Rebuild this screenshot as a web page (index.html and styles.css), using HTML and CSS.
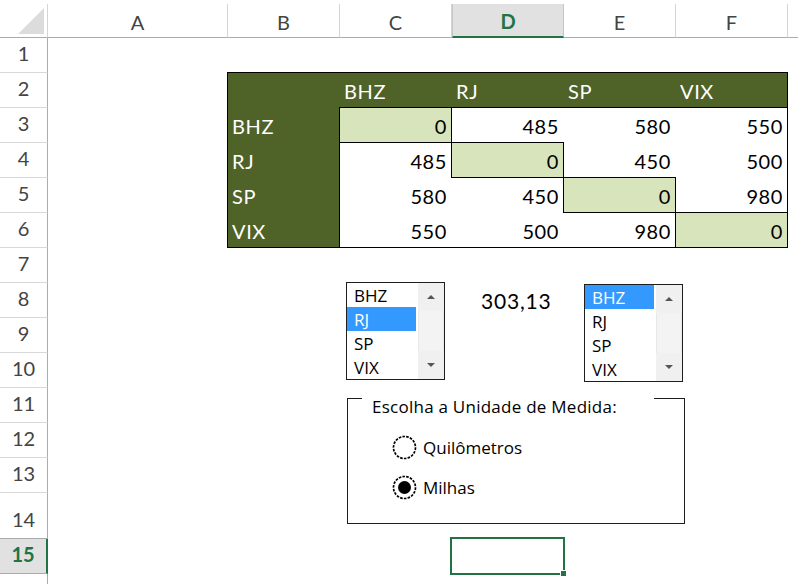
FILE: index.html
```html
<!DOCTYPE html>
<html lang="pt">
<head>
<meta charset="utf-8">
<title>Distâncias</title>
<link rel="stylesheet" href="styles.css">
</head>
<body>
<div class="app">
  <div class="sheet">
    <div class="corner"><svg class="tri" width="47" height="33" viewBox="0 0 47 33"><polygon points="18,30 44,30 44,4" fill="#dcdcdc"/></svg></div>
    <div class="ch">A</div>
    <div class="ch">B</div>
    <div class="ch">C</div>
    <div class="ch ch-active">D</div>
    <div class="ch">E</div>
    <div class="ch">F</div>
    <div class="ch ch-fill"></div>

    <div class="rh r1">1</div>
    <div class="rh r2">2</div>
    <div class="rh r3">3</div>
    <div class="rh r4">4</div>
    <div class="rh r5">5</div>
    <div class="rh r6">6</div>
    <div class="rh r7">7</div>
    <div class="rh r8">8</div>
    <div class="rh r9">9</div>
    <div class="rh r10">10</div>
    <div class="rh r11">11</div>
    <div class="rh r12">12</div>
    <div class="rh r13">13</div>
    <div class="rh r14">14</div>
    <div class="rh r15 rh-active">15</div>
    <div class="rh r16"></div>

    <div class="matrix">
      <div class="c hd"></div>
      <div class="c hd lbl-col">BHZ</div>
      <div class="c hd lbl-col">RJ</div>
      <div class="c hd lbl-col">SP</div>
      <div class="c hd lbl-col">VIX</div>

      <div class="c hd lbl-row">BHZ</div>
      <div class="c n diag bt bl">0</div>
      <div class="c n bt bl">485</div>
      <div class="c n bt">580</div>
      <div class="c n bt">550</div>

      <div class="c hd lbl-row">RJ</div>
      <div class="c n bt bl">485</div>
      <div class="c n diag bt bl">0</div>
      <div class="c n bl">450</div>
      <div class="c n">500</div>

      <div class="c hd lbl-row">SP</div>
      <div class="c n bl">580</div>
      <div class="c n bt">450</div>
      <div class="c n diag bt bl">0</div>
      <div class="c n bl">980</div>

      <div class="c hd lbl-row">VIX</div>
      <div class="c n bl">550</div>
      <div class="c n">500</div>
      <div class="c n bt">980</div>
      <div class="c n diag bt bl">0</div>
    </div>

    <div class="sel"><span class="handle"></span></div>
  </div>

  <div class="listbox lb1">
    <div class="items">
      <div class="item">BHZ</div>
      <div class="item on">RJ</div>
      <div class="item">SP</div>
      <div class="item">VIX</div>
    </div>
    <div class="sb"><div class="btn"><span class="up"></span></div><div class="track"></div><div class="btn"><span class="down"></span></div></div>
  </div>

  <div class="result">303,13</div>

  <div class="listbox lb2">
    <div class="items">
      <div class="item on">BHZ</div>
      <div class="item">RJ</div>
      <div class="item">SP</div>
      <div class="item">VIX</div>
    </div>
    <div class="sb"><div class="btn"><span class="up"></span></div><div class="track"></div><div class="btn"><span class="down"></span></div></div>
  </div>

  <div class="grp">
    <div class="grp-head"><span class="grp-title">Escolha a Unidade de Medida:</span></div>
    <div class="radios">
      <div class="radio">
        <svg class="rb" width="25" height="25" viewBox="0 0 25 25"><circle cx="12.5" cy="12.5" r="11" fill="#fff" stroke="#000" stroke-width="1.7" stroke-dasharray="2.6 1.2"/></svg>
        <span>Quilômetros</span>
      </div>
      <div class="radio">
        <svg class="rb" width="25" height="25" viewBox="0 0 25 25"><circle cx="12.5" cy="12.5" r="11" fill="#fff" stroke="#000" stroke-width="1.7" stroke-dasharray="2.6 1.2"/><circle cx="12.5" cy="12.5" r="6.5" fill="#000"/></svg>
        <span>Milhas</span>
      </div>
    </div>
  </div>
</div>
</body>
</html>
```

FILE: styles.css
```css
* { box-sizing: border-box; }
html, body { margin: 0; padding: 0; background: #fff; }
body { width: 798px; height: 584px; overflow: hidden; font-family: Lato, "Liberation Sans", sans-serif; }

.app { position: relative; width: 798px; height: 584px; padding-top: 4px; }

.sheet {
  display: grid;
  grid-template-columns: 48px 180px 112px 112px 112px 112px 112px 1fr;
  grid-template-rows: 34px repeat(13, 35px) 46px 35px 1fr;
  height: 580px;
}

.corner { border-right: 1px solid #d4d4d4; border-bottom: 1px solid #ababab; }
.tri { display: block; }

.ch {
  display: flex; align-items: center; justify-content: center;
  padding-top: 2px;
  border-right: 1px solid #d4d4d4;
  border-bottom: 1px solid #ababab;
  font-size: 20px; color: #444;
}
.ch-fill { border-right: none; }
.ch-active { background: #e1e1e1; color: #217346; font-weight: 700; border-bottom: 2px solid #217346; border-left: 1px solid #c6c6c6; border-right-color: #c6c6c6; }

.rh {
  grid-column: 1;
  display: flex; align-items: flex-end; justify-content: center;
  padding-bottom: 7px;
  border-right: 1px solid #ababab;
  border-bottom: 1px solid #d8d8d8;
  font-size: 20px; color: #444;
}
.r16 { border-bottom: none; }
.rh-active { background: #e1e1e1; color: #217346; font-weight: 700; border-right: 2px solid #217346; border-bottom-color: #ababab; }
.r14 { border-bottom-color: #ababab; }

.matrix {
  grid-column: 3 / 8;
  grid-row: 3 / 8;
  margin: -1px 0 0 -1px;
  border: 1px solid #000;
  display: grid;
  grid-template-columns: 111px repeat(4, 112px);
  grid-template-rows: 34px repeat(4, 35px);
  background: #fff;
}
.c {
  display: flex; align-items: flex-end;
  padding: 0 5px 6px 5px;
  font-size: 20px; line-height: 1; letter-spacing: 0.6px;
  color: #000;
}
.hd { background: #4f6228; color: #fff; }
.lbl-row { padding-left: 4px; }
.n { justify-content: flex-end; padding-right: 4px; }
.diag { background: #d8e4bc; }
.bt { border-top: 1px solid #000; }
.bl { border-left: 1px solid #000; }

.sel {
  grid-column: 5; grid-row: 16;
  margin: 0 1px 1px 0;
  outline: 2px solid #217346;
  position: relative;
  z-index: 2;
}
.handle {
  position: absolute; right: -4px; bottom: -4px;
  width: 7px; height: 7px;
  background: #217346; border: 1px solid #fff;
}

/* floating form controls */
.listbox {
  position: absolute;
  width: 99px; height: 98px;
  border: 1px solid #1e1e1e;
  background: #fff;
  display: flex;
  font-family: "Open Sans", "Noto Sans", sans-serif;
  font-size: 17px; color: #000;
  z-index: 3;
}
.lb1 { left: 346px; top: 282px; }
.lb2 { left: 584px; top: 284px; }
.items { width: 69px; overflow: hidden; }
.item { height: 24px; line-height: 24px; padding: 1px 0 0 7px; }
.item.on { background: #3399ff; color: #fff; }
.sb {
  width: 26px; margin-left: 2px;
  background: #f0f0f0;
  display: flex; flex-direction: column;
}
.btn { height: 28px; display: flex; align-items: center; justify-content: center; }
.track { flex: 1; background: #f3f3f3; border-left: 1px solid #e8e8e8; border-right: 1px solid #e8e8e8; }
.up { width: 0; height: 0; border-left: 4px solid transparent; border-right: 4px solid transparent; border-bottom: 4px solid #555; }
.down { width: 0; height: 0; border-left: 4px solid transparent; border-right: 4px solid transparent; border-top: 4px solid #555; }

.result {
  position: absolute; left: 481px; top: 289px;
  font-size: 21px; line-height: 24px; letter-spacing: 0.8px;
  color: #000;
  z-index: 3;
}

.grp {
  position: absolute; left: 347px; top: 398px;
  width: 338px; height: 126px;
  border: 1px solid #1e1e1e; border-top: none;
  background: #fff;
  font-family: "Open Sans", "Noto Sans", sans-serif;
  font-size: 17px; color: #000;
  z-index: 3;
}
.grp-head { display: flex; }
.grp-head::before { content: ""; width: 14px; border-top: 1px solid #1e1e1e; }
.grp-head::after { content: ""; flex: 1; border-top: 1px solid #1e1e1e; }
.grp-title { width: 292px; padding-left: 10px; line-height: 18px; white-space: nowrap; letter-spacing: 0.25px; }
.radios { padding: 11px 0 0 44px; display: flex; flex-direction: column; }
.radio { height: 40px; display: flex; align-items: center; gap: 6px; }
.rb { display: block; }
```
